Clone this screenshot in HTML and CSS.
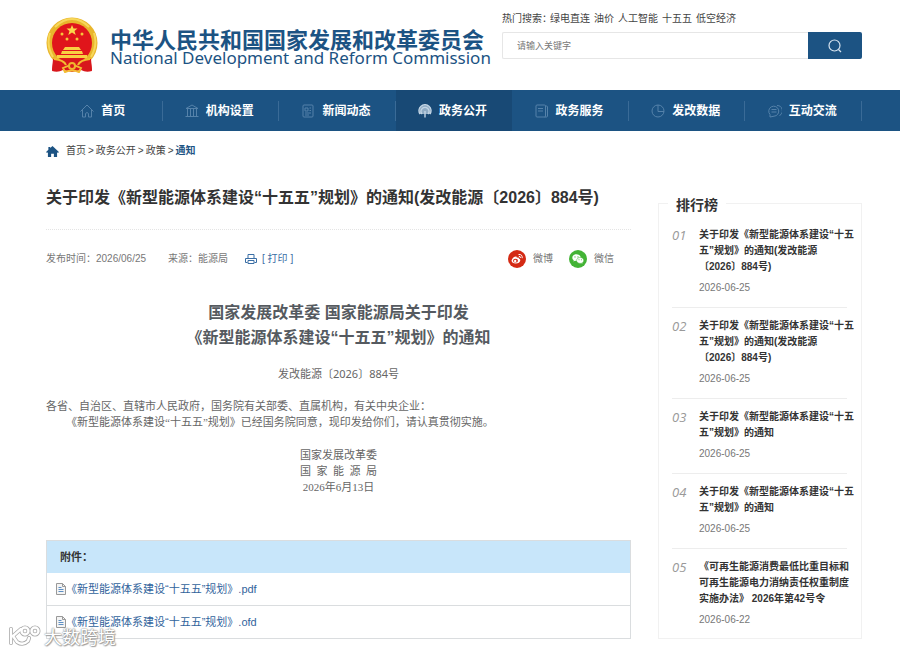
FILE: index.html
```html
<!DOCTYPE html>
<html lang="zh-CN">
<head>
<meta charset="utf-8">
<meta name="viewport" content="width=device-width, initial-scale=1">
<title>关于印发《新型能源体系建设“十五五”规划》的通知</title>
<link rel="stylesheet" href="styles.css">
</head>
<body>
<header class="header wrap">
  <a class="brand" href="#">
    <svg class="emblem" viewBox="0 0 52 56" aria-hidden="true">
      <path d="M8 38 6 54q6 2 11-1l9 2 9-2q5 3 11 1l-2-16z" fill="#d8171c"/>
      <circle cx="26" cy="26" r="25.500" fill="#e9b62c"/>
      <path d="M7 40Q0 28 4 16M45 40q7-12 3-24M9 10Q17 2 26 2t17 8" fill="none" stroke="#f7d75a" stroke-width="2"/>
      <circle cx="26" cy="26" r="20" fill="#e0151b"/>
      <path d="m26 8 1.500 3.500h4l-3 2.500 1.200 4-3.700-2.400-3.700 2.400 1.200-4-3-2.500h4z" fill="#fbd84b"/>
      <g fill="#f5c63a"><circle cx="16" cy="17" r="1.500"/><circle cx="36" cy="17" r="1.500"/><circle cx="21" cy="22" r="1.500"/><circle cx="31" cy="22" r="1.500"/></g>
      <path d="M19 30h14l2 3H17zM16 34h20l1 3H15zM11 38h30v3H11z" fill="#f9cf42"/>
      <path d="M7 42h38l1 11H6z" fill="#d8171c"/>
      <path d="M8 42q10 1 12 6M44 42q-10 1-12 6M17 51q9-5 18 0l-2 4q-7-3-14 0z" fill="none" stroke="#f3bd32" stroke-width="2"/>
      <circle cx="26" cy="49" r="4" fill="#efb62e"/><circle cx="26" cy="49" r="2" fill="#d8171c"/>
    </svg>
    <span class="brand-text">
      <span class="brand-cn">中华人民共和国国家发展和改革委员会</span>
      <span class="brand-en" lang="en">National Development and Reform Commission</span>
    </span>
  </a>
  <div class="search">
    <p class="hot"><span>热门搜索：</span><a href="#">绿电直连</a><a href="#">油价</a><a href="#">人工智能</a><a href="#">十五五</a><a href="#">低空经济</a></p>
    <form class="search-form">
      <input class="search-input" type="search" placeholder="请输入关键字" aria-label="请输入关键字">
      <button class="search-btn" type="button" aria-label="搜索">
        <svg viewBox="0 0 14 14" width="14" height="14" fill="none" stroke="#d5e2ee" stroke-width="1.200"><circle cx="6.500" cy="6.500" r="5.500"/><path d="m10.500 10.500 2.500 2.500"/></svg>
      </button>
    </form>
  </div>
</header>

<nav class="nav">
  <ul class="nav-list wrap">
    <li><a href="#"><svg class="nav-icon" viewBox="0 0 14 14"><path d="M.5 7.500 7 1l6.500 6.500M2.500 6v7h3V9.500q1.500-2 3 0V13h3V6"/></svg>首页</a></li>
    <li><a href="#"><svg class="nav-icon" viewBox="0 0 14 14"><path d="M1 4.500 7 1l6 3.500zM2.500 5v7M5.500 5v7M8.500 5v7M11.500 5v7M.5 12.500h13"/></svg>机构设置</a></li>
    <li><a href="#"><svg class="nav-icon" viewBox="0 0 14 14"><rect x="2" y="1" width="10" height="12" rx="1"/><path d="M4 4h3v3H4zM8.500 4H10M8.500 6.500H10M4 9h6M4 11h4"/></svg>新闻动态</a></li>
    <li class="active"><a href="#"><svg class="nav-icon" viewBox="0 0 14 14"><path d="M1 10V7a6 6 0 0 1 12 0v3z" fill="#8fabc4" stroke="none"/><path d="M2 10A6 6 0 1 1 12 10M4 10a4 4 0 1 1 6 0M7 7v6.500" stroke-width="1.400"/></svg>政务公开</a></li>
    <li><a href="#"><svg class="nav-icon" viewBox="0 0 14 14"><rect x="1" y="1" width="9.500" height="12" rx="1"/><path d="M10.500 2h1q1 0 1 1v9q0 1-1 1h-2M3 4.500h5M3 7h5"/></svg>政务服务</a></li>
    <li><a href="#"><svg class="nav-icon" viewBox="0 0 14 14"><circle cx="7" cy="7" r="6"/><path d="M7 1v6.500h6"/></svg>发改数据</a></li>
    <li><a href="#"><svg class="nav-icon" viewBox="0 0 14 14"><path d="M2 13v-2.500a5 5 0 1 1 4 1.700zM9 1.500a5.300 5.300 0 0 1 2.500 10M3.500 5.500h5M3.500 8h5"/></svg>互动交流</a></li>
  </ul>
</nav>

<div class="crumbs wrap">
  <svg class="crumb-home" viewBox="0 0 14 12" aria-hidden="true"><path d="M7 0 14 6.500l-1 1-1-.7V12H8.500V8.500h-3V12H2V6.800l-1 .7-1-1 2.500-2.300V1h2v1.300z" fill="#1c5383"/></svg>
  <a href="#">首页</a><i>&gt;</i><a href="#">政务公开</a><i>&gt;</i><a href="#">政策</a><i>&gt;</i><a class="current" href="#">通知</a>
</div>

<div class="page wrap">
  <main class="main">
    <h1 class="title">关于印发《新型能源体系建设“十五五”规划》的通知(发改能源〔2026〕884号)</h1>
    <div class="meta">
      <span class="date">发布时间：2026/06/25</span>
      <span class="source">来源：能源局</span>
      <a class="print" href="#"><svg viewBox="0 0 12 10" width="12" height="10" fill="none" stroke="#3a6ea5"><path d="M3 4V.5h6V4M2.500 8.500h-2v-4h11v4h-2"/><path d="M3 6.500h6v3H3z"/></svg>[ 打印 ]</a>
      <a class="share" href="#"><svg viewBox="0 0 18 18" width="18" height="18"><circle cx="9" cy="9" r="9" fill="#d42a14"/><path d="M3.500 10.500Q5 6.500 8 6.500q1 0 .8 1.200 2.200-.7 2.200.8 1.500.5 1.300 2-.6 3-4.500 3-4 0-4.300-3z" fill="#fff"/><ellipse cx="7.500" cy="10.700" rx="2.500" ry="1.900" fill="#d42a14"/><circle cx="7.200" cy="11" r="1.200" fill="#fff"/><path d="M10.500 4.500q4-.5 3.700 3.700M10.800 6.300q1.800-.2 1.600 1.700" fill="none" stroke="#fff"/></svg>微博</a>
      <a class="share" href="#"><svg viewBox="0 0 18 18" width="18" height="18"><circle cx="9" cy="9" r="9" fill="#43b335"/><path d="M7.500 4.300c-2.400 0-4.200 1.500-4.200 3.400 0 1 .6 2 1.500 2.600l-.4 1.300 1.600-.8 1.500.2c2.400 0 4.200-1.500 4.200-3.300s-1.800-3.400-4.200-3.400z" fill="#fff"/><path d="M11.200 7.500c-2 0-3.600 1.300-3.600 3s1.600 2.900 3.600 2.900l1.200-.2 1.300.7-.3-1.200c.8-.5 1.300-1.300 1.300-2.200 0-1.700-1.500-3-3.500-3z" fill="#fff" stroke="#43b335" stroke-width=".5"/><g fill="#43b335"><circle cx="6" cy="6.900" r=".6"/><circle cx="9" cy="6.900" r=".6"/><circle cx="10" cy="9.800" r=".5"/><circle cx="12.400" cy="9.800" r=".5"/></g></svg>微信</a>
    </div>
    <article class="article">
      <h2>国家发展改革委 国家能源局关于印发<br>《新型能源体系建设“十五五”规划》的通知</h2>
      <p class="doc-no">发改能源〔2026〕884号</p>
      <p>各省、自治区、直辖市人民政府，国务院有关部委、直属机构，有关中央企业：</p>
      <p class="indent">《新型能源体系建设“十五五”规划》已经国务院同意，现印发给你们，请认真贯彻实施。</p>
      <p class="sign">国家发展改革委<br>国&nbsp;&nbsp;家&nbsp;&nbsp;能&nbsp;&nbsp;源&nbsp;&nbsp;局<br>2026年6月13日</p>
    </article>
    <section class="files">
      <h3>附件：</h3>
      <ul>
        <li><svg class="file-icon" viewBox="0 0 10 12" aria-hidden="true"><path d="M.5.5h6l3 3v8h-9z" fill="#f4f4f4" stroke="#999"/><path d="M6.500.5v3h3" fill="none" stroke="#999"/><path d="M2.500 4.500h3M2.500 6.500h5M2.500 8.500h5" stroke="#5d8fc4"/></svg><a href="#">《新型能源体系建设“十五五”规划》.pdf</a></li>
        <li><svg class="file-icon" viewBox="0 0 10 12" aria-hidden="true"><path d="M.5.5h6l3 3v8h-9z" fill="#f4f4f4" stroke="#999"/><path d="M6.500.5v3h3" fill="none" stroke="#999"/><path d="M2.500 4.500h3M2.500 6.500h5M2.500 8.500h5" stroke="#5d8fc4"/></svg><a href="#">《新型能源体系建设“十五五”规划》.ofd</a></li>
      </ul>
    </section>
  </main>

  <aside class="rank">
    <h2 class="rank-title">排行榜</h2>
    <ol class="rank-list">
      <li><span class="num">01</span><div class="entry"><a href="#">关于印发《新型能源体系建设“十五五”规划》的通知(发改能源〔2026〕884号)</a><time>2026-06-25</time></div></li>
      <li><span class="num">02</span><div class="entry"><a href="#">关于印发《新型能源体系建设“十五五”规划》的通知(发改能源〔2026〕884号)</a><time>2026-06-25</time></div></li>
      <li><span class="num">03</span><div class="entry"><a href="#">关于印发《新型能源体系建设“十五五”规划》的通知</a><time>2026-06-25</time></div></li>
      <li><span class="num">04</span><div class="entry"><a href="#">关于印发《新型能源体系建设“十五五”规划》的通知</a><time>2026-06-25</time></div></li>
      <li><span class="num">05</span><div class="entry"><a href="#">《可再生能源消费最低比重目标和可再生能源电力消纳责任权重制度实施办法》 2026年第42号令</a><time>2026-06-22</time></div></li>
    </ol>
  </aside>
</div>

<div class="watermark">
  <svg viewBox="0 0 34 22" width="34" height="22" fill="none" stroke-linecap="round" stroke-linejoin="round">
    <g stroke="#aaa" stroke-width="4"><path d="M3 4v14M13 4 5 11l4 6q6 4 11-1l1-3"/><circle cx="17" cy="6" r="3.500"/><circle cx="27" cy="6" r="3.500"/></g>
    <g stroke="#fff" stroke-width="2.400"><path d="M3 4v14M13 4 5 11l4 6q6 4 11-1l1-3"/><circle cx="17" cy="6" r="3.500"/><circle cx="27" cy="6" r="3.500"/></g>
  </svg>
  <span>大数跨境</span>
</div>
</body>
</html>
```
FILE: styles.css
```css
* { box-sizing: border-box; }
body, h1, h2, h3, p, ul, ol { margin: 0; padding: 0; }
ul, ol { list-style: none; }
a { color: inherit; text-decoration: none; }
svg { flex: none; }

body {
  position: relative;
  background: #fff;
  color: #444;
  font: 10px/16px "Liberation Sans", "Noto Sans CJK SC", sans-serif;
  text-spacing-trim: space-all;
}

.wrap { margin: 0 38px 0 46px; }

/* Header */
.header {
  display: flex;
  justify-content: space-between;
  height: 90px;
}
.brand {
  display: flex;
  gap: 12px;
  padding-top: 17px;
  color: #1c5383;
}
.emblem { width: 52px; height: 56px; }
.brand-text {
  display: flex;
  flex-direction: column;
  padding-top: 10px;
  white-space: nowrap;
}
.brand-cn {
  font: bold 22px/22px "Noto Sans CJK SC", sans-serif;
}
.brand-en {
  font: 17px/18px "Noto Sans", sans-serif;
}
.search { width: 360px; padding-top: 11px; }
.hot { display: flex; gap: 4px; margin-bottom: 5px; }
.hot span { margin-right: -6px; }
.search-form { display: flex; height: 27px; }
.search-input {
  flex: 1;
  min-width: 0;
  padding: 0 14px;
  border: 1px solid #e6e6e6;
  border-right: 0;
  border-radius: 2px 0 0 2px;
  background: #fff;
  font: 9px "Liberation Sans", "Noto Sans CJK SC", sans-serif;
}
.search-input::placeholder { color: #777; }
.search-btn {
  display: flex;
  align-items: center;
  justify-content: center;
  width: 54px;
  padding: 0;
  border: 0;
  border-radius: 0 2px 2px 0;
  background: #1c5383;
}

/* Navigation */
.nav { background: #1c5383; }
.nav-list { display: flex; height: 41px; }
.nav-list li {
  display: flex;
  flex: 1;
  align-items: center;
  background: linear-gradient(#3a6b97, #3a6b97) right center / 1px 20px no-repeat;
}
.nav-list .active { background: #184975; }
.nav-list a {
  display: flex;
  flex: 1;
  align-items: center;
  justify-content: center;
  gap: 7px;
  padding-right: 3px;
  color: #fff;
  font-size: 12px;
  font-weight: bold;
}
.nav-icon {
  width: 14px;
  height: 14px;
  fill: none;
  stroke: #5582aa;
}
.active .nav-icon { stroke: #c3d5e5; }

/* Breadcrumb */
.crumbs {
  display: flex;
  align-items: center;
  height: 40px;
}
.crumb-home { width: 13px; height: 11px; margin-right: 7px; }
.crumbs i { margin: 0 2px; font-style: normal; }
.crumbs .current { color: #1c5383; font-weight: bold; }

/* Page columns */
.page {
  display: grid;
  grid-template-columns: minmax(0, 1fr) 204px;
  gap: 27px;
  align-items: start;
  padding: 16px 0 12px;
}
.title {
  padding-bottom: 20px;
  border-bottom: 1px dotted #e4e4e4;
  color: #333;
  font-size: 16px;
  line-height: 22px;
}
.meta {
  display: flex;
  align-items: center;
  height: 20px;
  margin-top: 19px;
  padding-right: 17px;
  color: #777;
}
.source { margin-left: 22px; }
.print {
  display: flex;
  align-items: center;
  gap: 5px;
  margin: 0 auto 0 17px;
  color: #3a6ea5;
}
.share { display: flex; align-items: center; gap: 7px; }
.share + .share { margin-left: 16px; }

/* Article */
.article {
  margin-top: 31px;
  color: #666;
  font-family: "Liberation Serif", "Noto Sans CJK SC", serif;
  font-size: 11px;
}
.article h2 {
  color: #555a60;
  font: bold 16px/25px "Liberation Sans", "Noto Sans CJK SC", sans-serif;
  text-align: center;
}
.doc-no {
  margin: 16px 0;
  font-family: "Noto Sans", "Noto Sans CJK SC", sans-serif;
  text-align: center;
}
.indent { padding-left: 20px; }
.sign { margin-top: 17px; text-align: center; }

/* Attachments */
.files {
  margin-top: 45px;
  border: 1px solid #dadddf;
  font-size: 11px;
}
.files h3 {
  padding: 0 13px;
  background: #c8e6fa;
  color: #333;
  font-size: 11px;
  line-height: 32px;
}
.files li {
  display: flex;
  align-items: center;
  height: 32px;
  padding-left: 9px;
  color: #31639c;
}
.files li + li { height: 33px; border-top: 1px solid #dadddf; }
.file-icon { width: 10px; height: 12px; }

/* Ranking */
.rank {
  position: relative;
  margin-top: 16px;
  padding: 13px 14px 0 13px;
  border: 1px solid #f1f1f1;
}
.rank-title {
  position: absolute;
  top: -9px;
  left: 9px;
  padding: 0 8px;
  background: #fff;
  color: #333;
  font-size: 14px;
  line-height: 20px;
}
.rank-list li {
  display: flex;
  padding: 10px 0 11px;
  border-bottom: 1px solid #ededed;
}
.rank-list li:last-child { padding-bottom: 10px; border-bottom: 0; }
.num {
  flex: none;
  width: 27px;
  color: #999;
  font: italic 13px/16px "Open Sans", sans-serif;
}
.entry { flex: 1; min-width: 0; margin-right: -9px; }
.entry a { display: block; color: #333; font-weight: bold; }
.entry time { display: block; margin-top: 5px; color: #777; }

/* Overlay mark */
.watermark {
  position: absolute;
  bottom: 4px;
  left: 8px;
  display: flex;
  align-items: center;
  gap: 2px;
  color: #fff;
  font: 18px/22px "Noto Sans CJK SC", sans-serif;
  text-shadow: 0 0 1px #888, 0 0 2px #888, 1px 1px 1px #aaa;
}
```
